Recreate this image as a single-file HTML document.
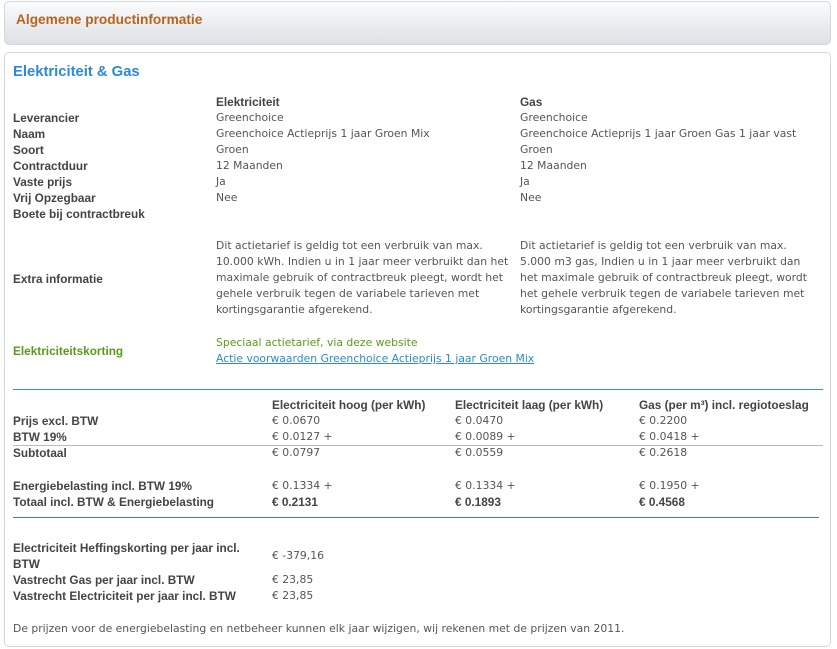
<!DOCTYPE html>
<html><head><meta charset="utf-8"><style>
body{margin:0;width:837px;height:649px;background:#fff;font-family:"DejaVu Sans",sans-serif;font-size:10.8px;color:#555;position:relative;overflow:hidden}
.a{position:absolute;white-space:nowrap;line-height:16px}
.b,b{font-family:"Liberation Sans",sans-serif;font-weight:bold;color:#444;font-size:11.8px}
.box1{position:absolute;left:4px;top:1px;width:825px;height:42px;border:1px solid #d4d8dc;border-radius:5px;background:linear-gradient(#fafbfc,#dde1e5)}
.box2{position:absolute;left:4px;top:52px;width:825px;height:593px;border:1px solid #d4d8dc;border-radius:5px;background:#fff}
.ln{position:absolute;height:0;border-top:1px solid #3a8fd8}
</style></head><body>
<div class="box1"></div>
<div class="a b" style="left:16px;top:12px;font-size:13.7px;color:#b5651d">Algemene productinformatie</div>
<div class="box2"></div>
<div class="a b" style="left:13px;top:64px;font-size:14.8px;color:#2a8ad8">Elektriciteit &amp; Gas</div>

<div class="a b" style="left:216px;top:94px">Elektriciteit</div>
<div class="a b" style="left:520px;top:94px">Gas</div>
<div class="a b" style="left:13px;top:110px">Leverancier</div>
<div class="a b" style="left:13px;top:126px">Naam</div>
<div class="a b" style="left:13px;top:142px">Soort</div>
<div class="a b" style="left:13px;top:158px">Contractduur</div>
<div class="a b" style="left:13px;top:174px">Vaste prijs</div>
<div class="a b" style="left:13px;top:190px">Vrij Opzegbaar</div>
<div class="a b" style="left:13px;top:206px">Boete bij contractbreuk</div>
<div class="a" style="left:216px;top:110px">Greenchoice<br>Greenchoice Actieprijs 1 jaar Groen Mix<br>Groen<br>12 Maanden<br>Ja<br>Nee</div>
<div class="a" style="left:520px;top:110px">Greenchoice<br>Greenchoice Actieprijs 1 jaar Groen Gas 1 jaar vast<br>Groen<br>12 Maanden<br>Ja<br>Nee</div>
<div class="a b" style="left:13px;top:271px">Extra informatie</div>
<div class="a" style="left:216px;top:238px">Dit actietarief is geldig tot een verbruik van max.<br>10.000 kWh. Indien u in 1 jaar meer verbruikt dan het<br>maximale gebruik of contractbreuk pleegt, wordt het<br>gehele verbruik tegen de variabele tarieven met<br>kortingsgarantie afgerekend.</div>
<div class="a" style="left:520px;top:238px">Dit actietarief is geldig tot een verbruik van max.<br>5.000 m3 gas, Indien u in 1 jaar meer verbruikt dan<br>het maximale gebruik of contractbreuk pleegt, wordt<br>het gehele verbruik tegen de variabele tarieven met<br>kortingsgarantie afgerekend.</div>
<div class="a b" style="left:13px;top:343px;color:#5a9a1a">Elektriciteitskorting</div>
<div class="a" style="left:216px;top:335px;color:#5a9a1a">Speciaal actietarief, via deze website</div>
<div class="a" style="left:216px;top:351px;color:#2a8ad8;text-decoration:underline">Actie voorwaarden Greenchoice Actieprijs 1 jaar Groen Mix</div>

<div class="ln" style="left:13px;top:389px;width:810px"></div>
<div class="a b" style="left:272px;top:397px">Electriciteit hoog (per kWh)</div>
<div class="a b" style="left:455px;top:397px">Electriciteit laag (per kWh)</div>
<div class="a b" style="left:639px;top:397px">Gas (per m³) incl. regiotoeslag</div>
<div class="a b" style="left:13px;top:413px">Prijs excl. BTW<br>BTW 19%</div>
<div class="a" style="left:272px;top:413px">€ 0.0670<br>€ 0.0127 +</div>
<div class="a" style="left:455px;top:413px">€ 0.0470<br>€ 0.0089 +</div>
<div class="a" style="left:639px;top:413px">€ 0.2200<br>€ 0.0418 +</div>
<div class="ln" style="left:13px;top:445px;width:810px;border-color:#bbb"></div>
<div class="a b" style="left:13px;top:445px">Subtotaal</div>
<div class="a" style="left:272px;top:445px">€ 0.0797</div>
<div class="a" style="left:455px;top:445px">€ 0.0559</div>
<div class="a" style="left:639px;top:445px">€ 0.2618</div>
<div class="a b" style="left:13px;top:478px">Energiebelasting incl. BTW 19%<br>Totaal incl. BTW &amp; Energiebelasting</div>
<div class="a" style="left:272px;top:478px">€ 0.1334 +<br><b>€ 0.2131</b></div>
<div class="a" style="left:455px;top:478px">€ 0.1334 +<br><b>€ 0.1893</b></div>
<div class="a" style="left:639px;top:478px">€ 0.1950 +<br><b>€ 0.4568</b></div>
<div class="ln" style="left:13px;top:517px;width:806px;border-color:#3a7fc0"></div>

<div class="a b" style="left:13px;top:540px">Electriciteit Heffingskorting per jaar incl.<br>BTW</div>
<div class="a" style="left:272px;top:548px">€ -379,16</div>
<div class="a b" style="left:13px;top:572px">Vastrecht Gas per jaar incl. BTW<br>Vastrecht Electriciteit per jaar incl. BTW</div>
<div class="a" style="left:272px;top:572px">€ 23,85<br>€ 23,85</div>
<div class="a" style="left:13px;top:621px">De prijzen voor de energiebelasting en netbeheer kunnen elk jaar wijzigen, wij rekenen met de prijzen van 2011.</div>
</body></html>
